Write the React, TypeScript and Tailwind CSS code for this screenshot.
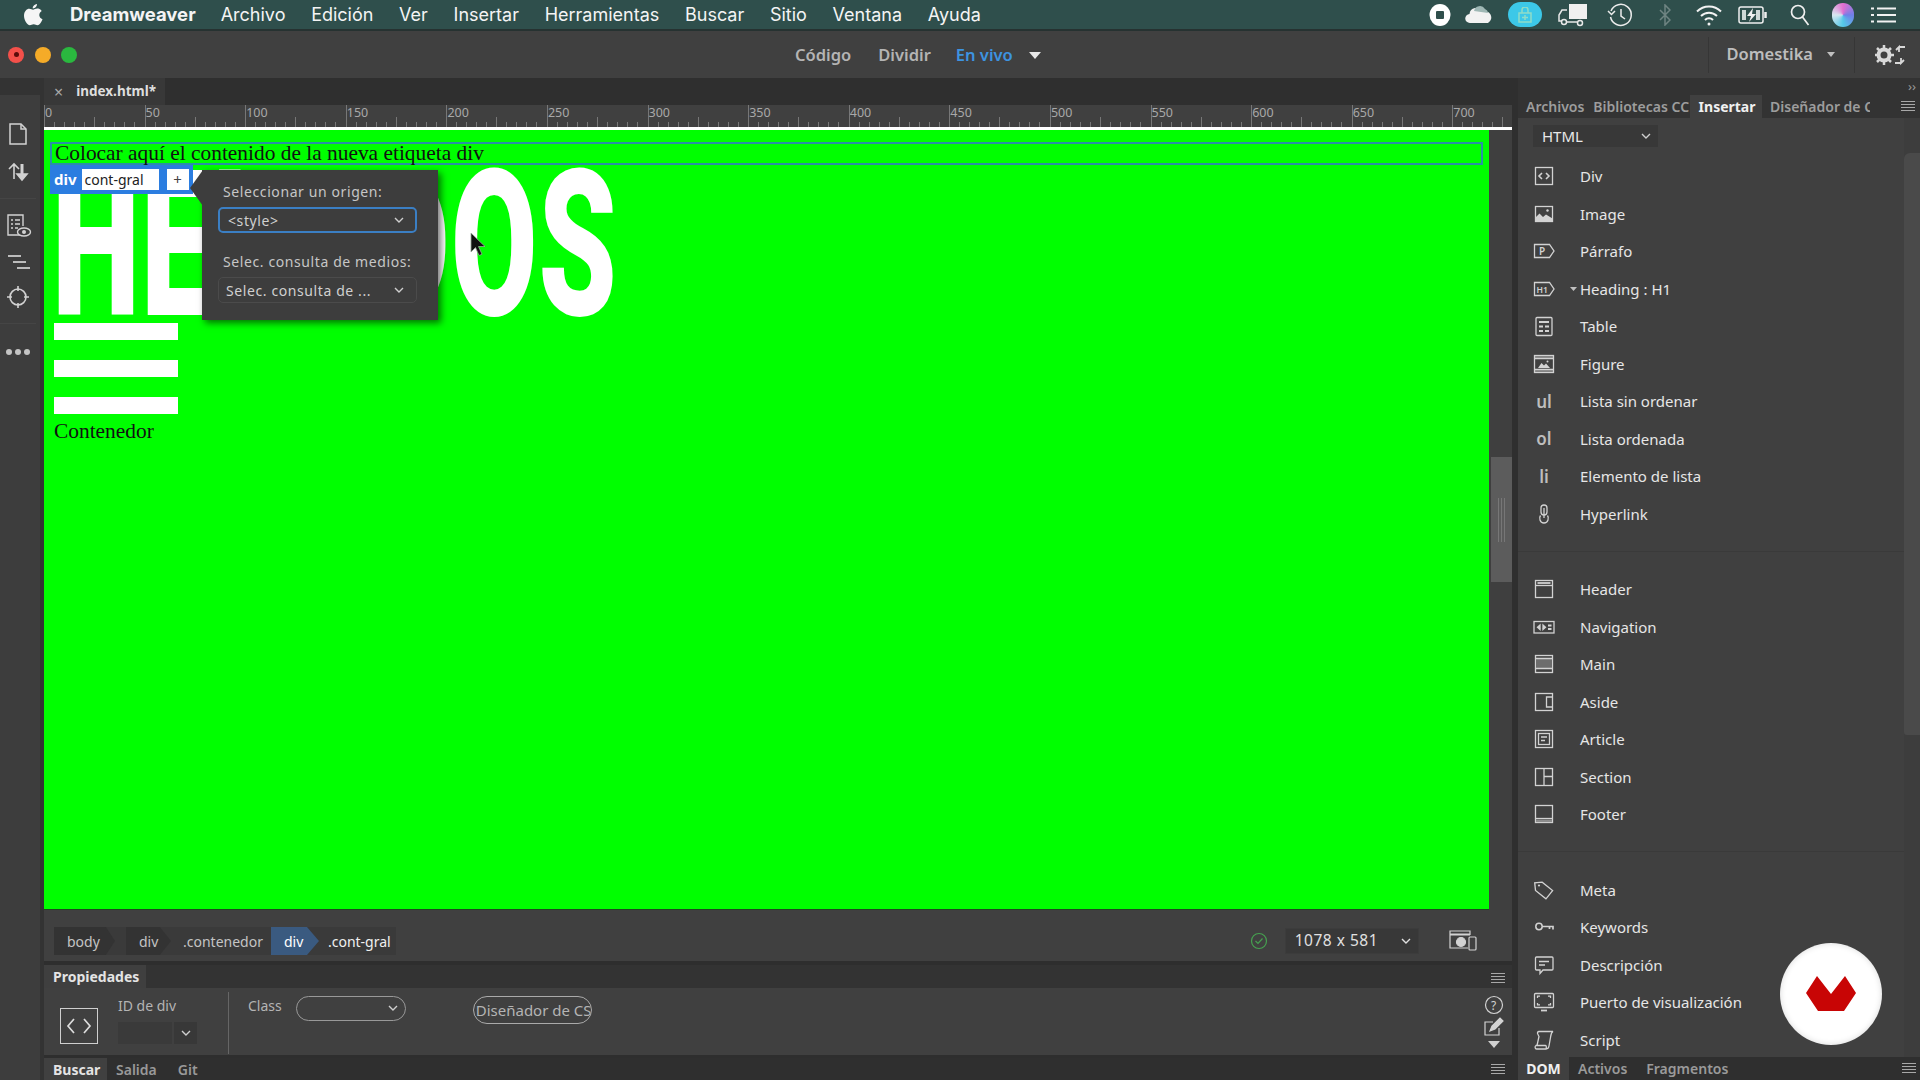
import React from "react";

const stroke = "#d2d2d2";

function Ico({children, w = 24, h = 24, className = ""}: { children: React.ReactNode; w?: number; h?: number; className?: string }) {
    return (
        <svg width={w} height={h} viewBox={`0 0 ${w} ${h}`} fill="none" stroke={stroke} strokeWidth={1.3} className={className}>
            {children}
        </svg>
    );
}

function Chevron({color = "#cfcfcf"}: { color?: string }) {
    return (
        <svg width="10" height="7" viewBox="0 0 10 7" fill="none" stroke={color} strokeWidth={1.4}>
            <path d="M1 1l4 4 4-4"/>
        </svg>
    );
}

function Burger({className = ""}: { className?: string }) {
    return (
        <svg width="14" height="11" viewBox="0 0 14 11" stroke="#a8a8a8" strokeWidth={1} className={className}>
            <path d="M0 .5h14M0 3.5h14M0 6.5h14M0 9.5h14"/>
        </svg>
    );
}

const insertIcons: Record<string, React.ReactNode> = {
    div: <Ico><rect x="3.5" y="3.5" width="17" height="17"/><path d="M10 9l-3 3 3 3M14 9l3 3-3 3" strokeWidth={1.6}/></Ico>,
    image: <Ico><rect x="3.5" y="4.5" width="17" height="15"/><path d="M3.5 19.5v-4l4-4 3.5 3.5 3-2.5 6.5 4v3z" fill={stroke} stroke="none"/><circle cx="15.5" cy="8.5" r="1.2" fill={stroke} stroke="none"/></Ico>,
    p: <Ico><path d="M2.5 5.5h15l4.5 6.5-4.5 6.5h-15z"/><text x="7" y="16" fontSize="10" fill={stroke} stroke="none" fontFamily="Noto Sans">P</text></Ico>,
    h1: <Ico><path d="M2.5 5.5h15l4.5 6.5-4.5 6.5h-15z"/><text x="4.5" y="15.5" fontSize="8.5" fill={stroke} stroke="none" fontFamily="Noto Sans">H1</text></Ico>,
    table: <Ico><rect x="4" y="3.5" width="16" height="18" rx="1"/><path d="M7 8h10M7 12.5h4M13 12.5h4M7 17h4M13 17h4" strokeWidth={2}/></Ico>,
    figure: <Ico><rect x="2.5" y="3.5" width="19" height="17"/><path d="M2.5 6.5h19M2.5 17.5h19"/><path d="M2.5 5h19M2.5 19h19" strokeDasharray="1 1"/><path d="M6 16l3.5-5 2.5 2.5 2-2 4 4.5z" fill={stroke} stroke="none"/><circle cx="15.5" cy="9.5" r="1" fill={stroke} stroke="none"/></Ico>,
    link: <Ico><path d="M9 10V6a3 3 0 0 1 6 0v4a3 3 0 0 1-6 0"/><path d="M12 6v10"/><path d="M8.5 13.5c-1.5 2-1 7.5 3.5 7.5s5-5.5 3.5-7.5"/></Ico>,
    header: <Ico><rect x="3.5" y="3.5" width="17" height="17"/><path d="M3.5 8.5h17"/><path d="M5.5 6h13" strokeWidth={1.8}/></Ico>,
    nav: <Ico><rect x="2" y="6.5" width="20" height="11.5"/><path d="M8 10l-2.5 2.2 2.5 2.3zM11 10l2.5 2.2-2.5 2.3z" fill={stroke}/><path d="M16 10.5h3.5M16 14h3.5" strokeWidth={1.8}/></Ico>,
    main: <Ico><rect x="3.5" y="3.5" width="17" height="17"/><rect x="4" y="6.5" width="16" height="10" fill="#6d6d6d" stroke="none"/><path d="M3.5 6.5h17M3.5 16.5h17"/></Ico>,
    aside: <Ico><rect x="3.5" y="3.5" width="17" height="17"/><path d="M20.5 7h-6v10h6"/></Ico>,
    article: <Ico><rect x="3.5" y="3.5" width="17" height="17"/><rect x="6.5" y="6.5" width="11" height="11"/><path d="M9 10h6M9 13.5h4" strokeWidth={1.5}/></Ico>,
    section: <Ico><rect x="3.5" y="3.5" width="17" height="17"/><path d="M12 3.5v17M12 11.5h8.5"/></Ico>,
    footer: <Ico><rect x="3.5" y="3.5" width="17" height="17"/><path d="M3.5 16.5h17"/><path d="M4 18.8h16" strokeWidth={2.5} stroke="#8d8d8d"/></Ico>,
    meta: <Ico><path d="M3.5 4v7.5l9.5 9.5 7.5-7.5L11 4z" transform="rotate(-6 12 12)"/><circle cx="7" cy="7.5" r="1.1" fill={stroke} stroke="none"/></Ico>,
    key: <Ico><circle cx="7" cy="11.5" r="3.2" strokeWidth={1.5}/><path d="M10 11.5h11v3M17.5 11.5v2.5" strokeWidth={1.7}/></Ico>,
    desc: <Ico><path d="M4.5 4H20a1 1 0 0 1 1 1v11a1 1 0 0 1-1 1h-9l-3 3.5V17H4.5a1 1 0 0 1-1-1V5a1 1 0 0 1 1-1z"/><path d="M7 8.5h10M7 12h6"/></Ico>,
    viewport: <Ico><rect x="2.5" y="3.5" width="19" height="14" rx="1"/><path d="M5.5 8V6.2H8M16 6.2h2.5V8M5.5 13v1.8H8M16 14.8h2.5V13"/><path d="M9 20.5h6" strokeWidth={1.8}/></Ico>,
    script: <Ico><path d="M7 3.5h14c-2 1-2 3-2.5 6L17 18c-.3 2-1.5 3-3 3H4.500c-1.500 0-2-2.500-.5-3.500h9.500c1 0 1 2 .5 3.500"/><path d="M7 3.500c-1.500 0-2 1.500-1 3l1 2-2 9"/></Ico>,
};

interface InsertRow {
    label: string;
    icon?: string;
    tag?: string;
    caret?: boolean;
}

const insertGroups: InsertRow[][] = [
    [
        {label: "Div", icon: "div"},
        {label: "Image", icon: "image"},
        {label: "Párrafo", icon: "p"},
        {label: "Heading : H1", icon: "h1", caret: true},
        {label: "Table", icon: "table"},
        {label: "Figure", icon: "figure"},
        {label: "Lista sin ordenar", tag: "ul"},
        {label: "Lista ordenada", tag: "ol"},
        {label: "Elemento de lista", tag: "li"},
        {label: "Hyperlink", icon: "link"},
    ],
    [
        {label: "Header", icon: "header"},
        {label: "Navigation", icon: "nav"},
        {label: "Main", icon: "main"},
        {label: "Aside", icon: "aside"},
        {label: "Article", icon: "article"},
        {label: "Section", icon: "section"},
        {label: "Footer", icon: "footer"},
    ],
    [
        {label: "Meta", icon: "meta"},
        {label: "Keywords", icon: "key"},
        {label: "Descripción", icon: "desc"},
        {label: "Puerto de visualización", icon: "viewport"},
        {label: "Script", icon: "script"},
    ],
];

function MenuBar() {
    const items = ["Archivo", "Edición", "Ver", "Insertar", "Herramientas", "Buscar", "Sitio", "Ventana", "Ayuda"];
    return (
        <div className="flex h-[31px] flex-none items-center border-b-2 border-[#263231] bg-[#2f4f4c] font-['Inter',sans-serif] text-[18px] text-[#f4f4f4]">
            <svg width="20" height="24" viewBox="0 0 20 24" fill="#f5f5f5" className="ml-[23px]">
                <path d="M14 1c.2 2-1.800 4.500-4.200 4.400C9.500 3.300 11.700 1.200 14 1zM10 6.700c1.100 0 2.500-1.200 4.300-1.200 1.200 0 3.300.5 4.400 2.400-3.600 2.200-3 6.800.8 8.300-.9 2.400-3 6-5 6-1.500 0-2-1-3.800-1s-2.500 1-3.800 1C4 22.200 1 16.800 1 12.800 1 8.500 3.700 5.800 6.300 5.800c1.600 0 2.800.9 3.700.9z"/>
            </svg>
            <span className="ml-[27px] text-[18.5px] font-bold">Dreamweaver</span>
            <div className="ml-[25px] flex gap-[25.7px]">
                {items.map((item) => <span key={item}>{item}</span>)}
            </div>
            <div className="ml-auto mr-[18px] flex items-center">
                <div className="flex w-[36px] justify-center">
                    <svg width="22" height="24" viewBox="0 0 22 24"><ellipse cx="11" cy="12" rx="10.5" ry="11" fill="#fff"/><rect x="7" y="8" width="8" height="8" rx="1" fill="#2f4f4c"/></svg>
                </div>
                <div className="flex w-[42px] justify-center">
                    <svg width="28" height="18" viewBox="0 0 28 18" fill="#f2f2f2"><path d="M5 17a4.500 4.500 0 0 1-.5-9A6.500 6.500 0 0 1 17 6a5.500 5.500 0 0 1 6 11z"/><path d="M9 5a6 6 0 0 1 11-2 4.500 4.500 0 0 1 3 4" fill="#9fb8b5"/></svg>
                </div>
                <div className="flex w-[49px] justify-center">
                    <div className="flex h-[25px] w-[34px] items-center justify-center rounded-full bg-[#3cc8e8]">
                        <svg width="14" height="16" viewBox="0 0 14 16" fill="none" stroke="#8fdcc8" strokeWidth={1.5}><rect x="1" y="6" width="12" height="9"/><path d="M4 6V3a3 3 0 0 1 6 0v3M7 8v5M4 10.500h6"/></svg>
                    </div>
                </div>
                <div className="flex w-[48px] justify-center">
                    <svg width="30" height="24" viewBox="0 0 30 24"><rect x="11" y="1" width="18" height="15" fill="#f0f0f0"/><path d="M9 7H4L1 12v6h3" fill="none" stroke="#e8e8e8" strokeWidth={1.5}/><circle cx="6" cy="19" r="2.5" fill="none" stroke="#e8e8e8" strokeWidth={1.5}/><circle cx="22" cy="20" r="2.5" fill="none" stroke="#e8e8e8" strokeWidth={1.5}/><path d="M9 19h10" stroke="#e8e8e8" strokeWidth={1.5}/></svg>
                </div>
                <div className="flex w-[46.5px] justify-center">
                    <svg width="26" height="26" viewBox="0 0 26 26" fill="none" stroke="#ececec" strokeWidth={1.5}><path d="M4 9a10.500 10.500 0 1 1-.5 6"/><path d="M1 9l3.500 3.500L8 9"/><path d="M14 7v7l4 3"/></svg>
                </div>
                <div className="flex w-[43.5px] justify-center">
                    <svg width="12" height="22" viewBox="0 0 12 22" fill="none" stroke="#6f8482" strokeWidth={1.5}><path d="M1 6l10 10-5 5V1l5 5L1 16"/></svg>
                </div>
                <div className="flex w-[43px] justify-center">
                    <svg width="28" height="22" viewBox="0 0 28 22" fill="none" stroke="#f2f2f2" strokeWidth={2}><path d="M2 7.500a17 17 0 0 1 24 0M6 12a11.500 11.500 0 0 1 16 0M10 16a5.500 5.500 0 0 1 8 0"/><circle cx="14" cy="20" r="1.5" fill="#f2f2f2" stroke="none"/></svg>
                </div>
                <div className="flex w-[46.5px] justify-center">
                    <svg width="30" height="20" viewBox="0 0 30 20" fill="none" stroke="#f0f0f0" strokeWidth={1.5}><rect x="1" y="2" width="24" height="16" rx="2"/><path d="M27.500 7v6" strokeWidth={2.5}/><path d="M15 3l-6 8h4l-2 6 7-8h-4z" fill="#f0f0f0" stroke="none"/><path d="M4 5h4v10H4zM18 5h4v10h-4z" fill="#cfd8d7" stroke="none"/></svg>
                </div>
                <div className="flex w-[46px] justify-center">
                    <svg width="20" height="22" viewBox="0 0 20 22" fill="none" stroke="#f0f0f0" strokeWidth={1.7}><circle cx="8" cy="8" r="6.5"/><path d="M12.500 13l6 8"/></svg>
                </div>
                <div className="flex w-[41.5px] justify-center">
                    <div className="h-[24px] w-[22px] rounded-full bg-[conic-gradient(#e26fd0,#6f7fe8,#54c9e8,#d8e8f0,#e26fd0)]"/>
                </div>
                <div className="flex w-[38px] justify-center">
                    <svg width="25" height="18" viewBox="0 0 25 18" stroke="#f2f2f2" strokeWidth={2.2}><path d="M6 2.500h19M6 9h19M6 15.500h19M0 2.500h3M0 9h3M0 15.500h3"/></svg>
                </div>
            </div>
        </div>
    );
}

function TitleBar() {
    return (
        <div className="flex h-[47px] flex-none items-center bg-[#404040] text-[16.5px] font-semibold text-[#b4b4b4]">
            <div className="ml-[8px] flex gap-[10.5px]">
                <div className="flex h-[16px] w-[16px] items-center justify-center rounded-full bg-[#f4504a]"><div className="h-[5px] w-[5px] rounded-full bg-[#5c0c0a]"/></div>
                <div className="h-[16px] w-[16px] rounded-full bg-[#f5ab28]"/>
                <div className="h-[16px] w-[16px] rounded-full bg-[#2ab83f]"/>
            </div>
            <div className="ml-[718px] mt-[2px] flex items-center">
                <span>Código</span>
                <span className="ml-[27px]">Dividir</span>
                <span className="ml-[25px] text-[#3d93e0]">En vivo</span>
                <svg width="12" height="7" viewBox="0 0 12 7" fill="#e8e8e8" className="ml-[16px]"><path d="M0 0h12L6 7z"/></svg>
            </div>
            <div className="ml-auto mr-[65px] flex h-[36px] items-center border-x border-[#363636] pl-[17px] pr-[19px] text-[#bdbdbd]">
                <span>Domestika</span>
                <svg width="8" height="5" viewBox="0 0 8 5" fill="#c0c0c0" className="ml-[14px]"><path d="M0 0h8L4 5z"/></svg>
            </div>
            <svg width="32" height="22" viewBox="0 0 32 22" className="absolute left-[1875px]" fill="#d8d8d8">
                <circle cx="9" cy="11" r="5.5" fill="none" stroke="#d8d8d8" strokeWidth={4}/>
                <path d="M9 1v4M9 17v4M-1 11h4M15 11h4M2 4l3 3M13 15l3 3M16 4l-3 3M2 18l3-3" stroke="#d8d8d8" strokeWidth={2.5}/>
                <path d="M24 8V3l-3 3M24 3h6M26 14v5l3-3M26 19h-6" fill="none" stroke="#d8d8d8" strokeWidth={1.8}/>
            </svg>
        </div>
    );
}

function LeftToolbar() {
    return (
        <div className="flex w-[44px] flex-none flex-col border-r-[4px] border-[#333] bg-[#3d3d3d]">
            <div className="h-[17px] bg-[#333]"/>
            <div className="mt-[26px] flex flex-col items-center pr-[4px]">
                <svg width="24" height="26" viewBox="0 0 24 26" fill="none" stroke={stroke} strokeWidth={1.5}><path d="M4 3h11l5 5v15H4z"/><path d="M15 3v5h5"/></svg>
                <svg width="24" height="28" viewBox="0 0 24 28" fill="none" stroke={stroke} strokeWidth={1.6} className="mt-[11px]"><path d="M8 21V7M3 11l5-5 5 5"/><path d="M16 6v14" strokeWidth={3}/><path d="M11 16l5 6 5-6z" fill={stroke}/></svg>
                <div className="mt-[12px] h-px w-full bg-[#454545]"/>
                <svg width="28" height="28" viewBox="0 0 28 28" fill="none" stroke={stroke} strokeWidth={1.4} className="mt-[13px]"><path d="M17 23H4V3h15v11"/><path d="M7 8h2M11 8h5M7 12h2M11 12h5M7 16h2M11 16h3" strokeWidth={1.6}/><ellipse cx="20" cy="20" rx="6.5" ry="4" fill="#3d3d3d"/><circle cx="20" cy="20" r="2" fill={stroke} stroke="none"/></svg>
                <svg width="26" height="18" viewBox="0 0 26 18" stroke="#bcbcbc" strokeWidth={2} className="mt-[13px]"><path d="M3 3h13M8 9h13M12 15h13"/></svg>
                <svg width="26" height="26" viewBox="0 0 26 26" fill="none" stroke={stroke} strokeWidth={1.6} className="mt-[13px]"><circle cx="13" cy="13" r="8"/><path d="M13 2v5M13 19v5M2 13h5M19 13h5"/></svg>
                <div className="mt-[13px] h-px w-full bg-[#454545]"/>
                <div className="mt-[25px] flex gap-[3px]">
                    <div className="h-[6px] w-[6px] rounded-full bg-[#c4c4c4]"/>
                    <div className="h-[6px] w-[6px] rounded-full bg-[#c4c4c4]"/>
                    <div className="h-[6px] w-[6px] rounded-full bg-[#c4c4c4]"/>
                </div>
            </div>
        </div>
    );
}

function Ruler() {
    const marks = Array.from({length: 15}, (_, i) => i * 50);
    return (
        <div className="flex h-[22px] flex-none overflow-hidden bg-[#404040] text-[12.5px] leading-[15px] text-[#a8a8a8]">
            {marks.map((mark) => (
                <div key={mark} className="relative w-[100.6px] flex-none pl-[1px]">
                    {mark}
                    <svg width="101" height="22" viewBox="0 0 101 22" stroke="#858585" strokeWidth={0.8} className="absolute left-0 top-0">
                        <path d="M.5 0v22M50.5 12v10M10.5 17v5M20.5 17v5M30.5 17v5M40.5 17v5M60.5 17v5M70.5 17v5M80.5 17v5M90.5 17v5"/>
                    </svg>
                </div>
            ))}
        </div>
    );
}

function Popover() {
    return (
        <div className="absolute left-[158px] top-[40px] h-[150px] w-[236px] bg-[#3d3d3d] pl-[16px] pr-[21px] font-['Noto_Sans',sans-serif] text-[14px] tracking-[0.6px] text-[#c6c6c6] shadow-[3px_3px_7px_rgba(0,0,0,0.55)]">
            <svg width="13" height="36" viewBox="0 0 13 36" fill="#3d3d3d" className="absolute left-[-12px] top-0"><path d="M13 0v36L0 18z"/></svg>
            <div className="pl-[5px] pt-[12px] leading-[20px]">Seleccionar un origen:</div>
            <div className="mt-[5px] flex h-[26px] items-center justify-between rounded-[5px] border-2 border-[#3b7fc4] pl-[8px] pr-[11px] text-[#d0d0d0]">
                &lt;style&gt;
                <Chevron/>
            </div>
            <div className="pl-[5px] pt-[19px] leading-[20px]">Selec. consulta de medios:</div>
            <div className="mt-[5px] flex h-[26px] items-center justify-between rounded-[5px] border border-[#4b4b4b] pl-[7px] pr-[12px] text-[#d0d0d0]">
                Selec. consulta de ...
                <Chevron/>
            </div>
        </div>
    );
}

function Canvas() {
    return (
        <div className="relative flex min-h-0 flex-1 overflow-hidden">
            <div className="relative w-[1445px] flex-none overflow-hidden border-b border-[#1f4a1f] bg-[#00ff00] pt-[12px] font-['Liberation_Serif',serif] text-[21.4px] text-[#111]">
                <div className="ml-[6px] h-[23px] w-[1433px] border-2 border-[#2a8fa8] pl-[3px] leading-[18px]">
                    Colocar aquí el contenido de la nueva etiqueta div
                </div>
                <div className="ml-[10px] flex flex-col">
                    <div className="-ml-[2px] h-[158px] origin-left scale-x-[0.61] whitespace-nowrap font-['Roboto',sans-serif] text-[205px] font-black leading-[161px] tracking-[2px] text-white">
                        HELADOS
                    </div>
                    <div className="h-[17px] w-[124px] bg-white"/>
                    <div className="mt-[20px] h-[17px] w-[124px] bg-white"/>
                    <div className="mt-[20px] h-[17px] w-[124px] bg-white"/>
                    <div className="mt-[5px] leading-[24px]">Contenedor</div>
                </div>
                <div className="absolute left-[6px] top-[35px] flex h-[29px] w-[143px] items-center bg-[#2b7de0] pl-[4px] font-['Noto_Sans',sans-serif] text-[15px]">
                    <span className="font-bold leading-none text-white">div</span>
                    <div className="ml-[5px] flex h-[21px] w-[77px] items-center bg-white pl-[3px] text-[14px] text-[#222]">cont-gral</div>
                    <div className="ml-[8px] flex h-[21px] w-[22px] items-center justify-center bg-white text-[15px] text-[#444]">+</div>
                </div>
                <div className="absolute left-[151px] top-[40px] h-[8px] w-[8px] bg-white"/>
                <Popover/>
                <svg width="18" height="26" viewBox="0 0 18 26" className="absolute left-[425px] top-[102px]">
                    <path d="M2 1v19l4.500-4.500 3.500 8 3-1.300-3.500-7.700H16z" fill="#111" stroke="#9aa89a" strokeWidth={0.8}/>
                </svg>
            </div>
            <div className="relative flex-1 bg-[#3f3f3f]">
                <div className="absolute bottom-[328px] left-[2px] flex h-[125px] w-[21px] items-center justify-center gap-[2px] bg-[#5c5c5c]">
                    <div className="h-[44px] w-px bg-[#777]"/>
                    <div className="h-[44px] w-px bg-[#777]"/>
                    <div className="h-[44px] w-px bg-[#777]"/>
                </div>
            </div>
        </div>
    );
}

function StatusBar() {
    return (
        <div className="flex h-[51px] flex-none items-center bg-[#404040] pt-[11px] text-[14px] text-[#c4c4c4]">
            <div className="ml-[10px] flex h-[28px] items-center bg-[#3a3a3a]">
                <div className="flex h-full w-[61px] items-center bg-[#333] pl-[13px] [clip-path:polygon(0_0,85%_0,100%_50%,85%_100%,0_100%)]">body</div>
                <div className="ml-[11px] flex h-full w-[45px] items-center bg-[#333] pl-[13px] [clip-path:polygon(0_0,75%_0,100%_50%,75%_100%,0_100%)]">div</div>
                <span className="pl-[12px]">.contenedor</span>
                <div className="ml-[8px] flex h-full w-[48px] items-center bg-[#3a5a80] pl-[13px] text-white [clip-path:polygon(0_0,75%_0,100%_50%,75%_100%,0_100%)]">div</div>
                <span className="pl-[9px] pr-[5px] text-[#f0f0f0]">.cont-gral</span>
            </div>
            <svg width="18" height="18" viewBox="0 0 18 18" fill="none" stroke="#46a050" strokeWidth={1.2} className="ml-[854px]"><circle cx="9" cy="9" r="7.5"/><path d="M5.5 9L8 11.5l4.5-5"/></svg>
            <div className="ml-[17px] flex h-[26px] w-[134px] items-center justify-between border border-[#3c3c3c] bg-[#383838] pl-[9px] pr-[7px] text-[15.5px] tracking-[0.5px] text-[#e0e0e0]">
                1078 x 581
                <Chevron color="#e0e0e0"/>
            </div>
            <svg width="28" height="24" viewBox="0 0 28 24" fill="none" stroke={stroke} strokeWidth={1.2} className="ml-[30px]"><path d="M19 19H1V2h20v4"/><path d="M1 5.500h20" strokeWidth={2}/><circle cx="12" cy="13" r="4.5" fill={stroke}/><rect x="20" y="8" width="7" height="13" rx="1"/></svg>
        </div>
    );
}

function Properties() {
    return (
        <div className="flex flex-none flex-col bg-[#2e2e2e] pt-[4px]">
            <div className="flex h-[23px] items-stretch justify-between bg-[#333]">
                <div className="flex w-[102px] items-center bg-[#3f3f3f] pl-[9px] text-[14px] font-bold text-[#e4e4e4]">Propiedades</div>
                <Burger className="mr-[7px] mt-[8px]"/>
            </div>
            <div className="flex h-[67px] bg-[#404040] text-[14px] text-[#b4b4b4]">
                <div className="ml-[16px] mt-[20px] flex h-[36px] w-[38px] items-center justify-center border-[1.5px] border-[#cfcfcf]">
                    <svg width="26" height="18" viewBox="0 0 26 18" fill="none" stroke="#dcdcdc" strokeWidth={1.7}><path d="M8 2L2 9l6 7M18 2l6 7-6 7"/></svg>
                </div>
                <div className="ml-[20px] mt-[8px] flex flex-col">
                    <span className="leading-[20px]">ID de div</span>
                    <div className="mt-[6px] flex gap-[2px]">
                        <div className="h-[22px] w-[54px] bg-[#3a3a3a]"/>
                        <div className="flex h-[22px] w-[23px] items-center justify-center bg-[#383838]"><Chevron/></div>
                    </div>
                </div>
                <div className="ml-[31px] mt-[4px] h-[62px] w-px bg-[#666]"/>
                <span className="ml-[19px] mt-[8px] leading-[20px]">Class</span>
                <div className="ml-[14px] mt-[8px] flex h-[25px] w-[110px] items-center justify-end rounded-full border border-[#999] pr-[7px]"><Chevron/></div>
                <div className="ml-[67px] mt-[8px] h-[28px] w-[119px] overflow-hidden whitespace-nowrap rounded-full border border-[#aaa] pl-[2px] text-[15px] leading-[26px]">Diseñador de CSS</div>
                <div className="ml-auto mr-[7px] mt-[7px] flex flex-col items-center gap-[2px]">
                    <svg width="20" height="20" viewBox="0 0 20 20" fill="none" stroke={stroke} strokeWidth={1.2}><circle cx="10" cy="10" r="8.5"/><text x="7" y="14.5" fontSize="12" fill={stroke} stroke="none" fontFamily="Noto Sans">?</text></svg>
                    <svg width="22" height="20" viewBox="0 0 22 20" fill="none" stroke={stroke} strokeWidth={1.2}><path d="M10 5H2v13h14v-7"/><path d="M7 14l2-5 8-8 3 3-8 8z" fill={stroke}/></svg>
                    <svg width="12" height="7" viewBox="0 0 12 7" fill="#d0d0d0" className="mt-[2px]"><path d="M0 0h12L6 7z"/></svg>
                </div>
            </div>
            <div className="mt-[3px] flex h-[22px] items-center bg-[#2f2f2f] text-[14px] font-semibold text-[#999]">
                <div className="flex h-full w-[63px] items-center bg-[#404040] pl-[9px] font-bold text-[#e4e4e4]">Buscar</div>
                <span className="ml-[9px]">Salida</span>
                <span className="ml-[21px]">Git</span>
                <Burger className="ml-auto mr-[7px]"/>
            </div>
        </div>
    );
}

function InsertPanel() {
    return (
        <div className="relative flex w-[402px] flex-none flex-col bg-[#404040]">
            <div className="flex h-[17px] flex-none items-center justify-end bg-[#333] pr-[4px] text-[13px] leading-none text-[#999]">››</div>
            <div className="flex h-[23px] flex-none items-center bg-[#333] text-[14px] font-semibold text-[#9d9d9d]">
                <span className="ml-[8px]">Archivos</span>
                <span className="ml-[9px]">Bibliotecas CC</span>
                <div className="ml-[1px] flex h-full w-[72px] items-center justify-center bg-[#404040] pl-[2px] font-bold text-[#f0f0f0]">Insertar</div>
                <span className="ml-[8px] w-[100px] overflow-hidden whitespace-nowrap">Diseñador de CSS</span>
                <Burger className="ml-auto mr-[5px]"/>
            </div>
            <div className="flex min-h-0 flex-1">
                <div className="min-w-0 flex-1 overflow-hidden">
                    <div className="ml-[15px] mt-[7px] flex h-[22px] w-[125px] items-center justify-between bg-[#383838] pl-[9px] pr-[7px] text-[15px] text-[#e8e8e8]">
                        HTML
                        <Chevron/>
                    </div>
                    <div className="mt-[10.5px]">
                        {insertGroups.map((group, i) => (
                            <div key={i} className={i > 0 ? "mt-[18px] border-t border-[#3a3a3a] pt-[19px]" : ""}>
                                {group.map((row) => (
                                    <div key={row.label} className="flex h-[37.5px] items-center text-[15px] text-[#e6e6e6]">
                                        <div className="ml-[14px] flex w-[24px] justify-center text-[17px] font-semibold text-[#bdbdbd]">
                                            {row.icon ? insertIcons[row.icon] : row.tag}
                                        </div>
                                        <div className="relative ml-[24px]">
                                            {row.caret && (
                                                <svg width="7" height="4" viewBox="0 0 7 4" fill="#c0c0c0" className="absolute left-[-10px] top-[9px]"><path d="M0 0h7L3.500 4z"/></svg>
                                            )}
                                            {row.label}
                                        </div>
                                    </div>
                                ))}
                            </div>
                        ))}
                    </div>
                </div>
                <div className="w-[16px] flex-none bg-[#3d3d3d] pt-[35px]">
                    <div className="h-[582px] rounded-tl-[6px] rounded-bl-[3px] bg-[#4a4a4a]"/>
                </div>
            </div>
            <div className="flex h-[23px] flex-none items-center bg-[#2f2f2f] text-[14px] font-semibold text-[#9a9a9a]">
                <div className="flex h-full w-[51px] items-center justify-center bg-[#404040] font-bold text-[#f0f0f0]">DOM</div>
                <span className="ml-[9px]">Activos</span>
                <span className="ml-[19px]">Fragmentos</span>
                <Burger className="ml-auto mr-[4px]"/>
            </div>
            <div className="absolute left-[262px] top-[865px] flex h-[102px] w-[102px] items-center justify-center rounded-full bg-white shadow-[inset_0_0_6px_rgba(0,0,0,0.15)]">
                <svg width="50" height="36" viewBox="0 0 50 36" fill="#c80505"><path d="M0 17L11 0l14 18L39 0l11 17-12 18H12z"/></svg>
            </div>
        </div>
    );
}

export default function App() {
    return (
        <div className="relative flex h-[1080px] w-[1920px] flex-col overflow-hidden bg-[#333] font-['Noto_Sans',sans-serif]">
            <MenuBar/>
            <TitleBar/>
            <div className="flex min-h-0 flex-1">
                <LeftToolbar/>
                <div className="flex w-[1468px] flex-none flex-col">
                    <div className="flex h-[27px] flex-none items-stretch bg-[#2f2f2f] text-[13.5px] font-bold text-[#dedede]">
                        <div className="flex w-[121px] items-center bg-[#383838] pl-[10px]">
                            <span className="text-[16px] font-normal text-[#a8a8a8]">×</span>
                            <span className="ml-[13px]">index.html*</span>
                        </div>
                    </div>
                    <Ruler/>
                    <div className="h-[3px] flex-none bg-white"/>
                    <Canvas/>
                    <StatusBar/>
                    <Properties/>
                </div>
                <div className="w-[6px] flex-none bg-[#2f2f2f]"/>
                <InsertPanel/>
            </div>
        </div>
    );
}
